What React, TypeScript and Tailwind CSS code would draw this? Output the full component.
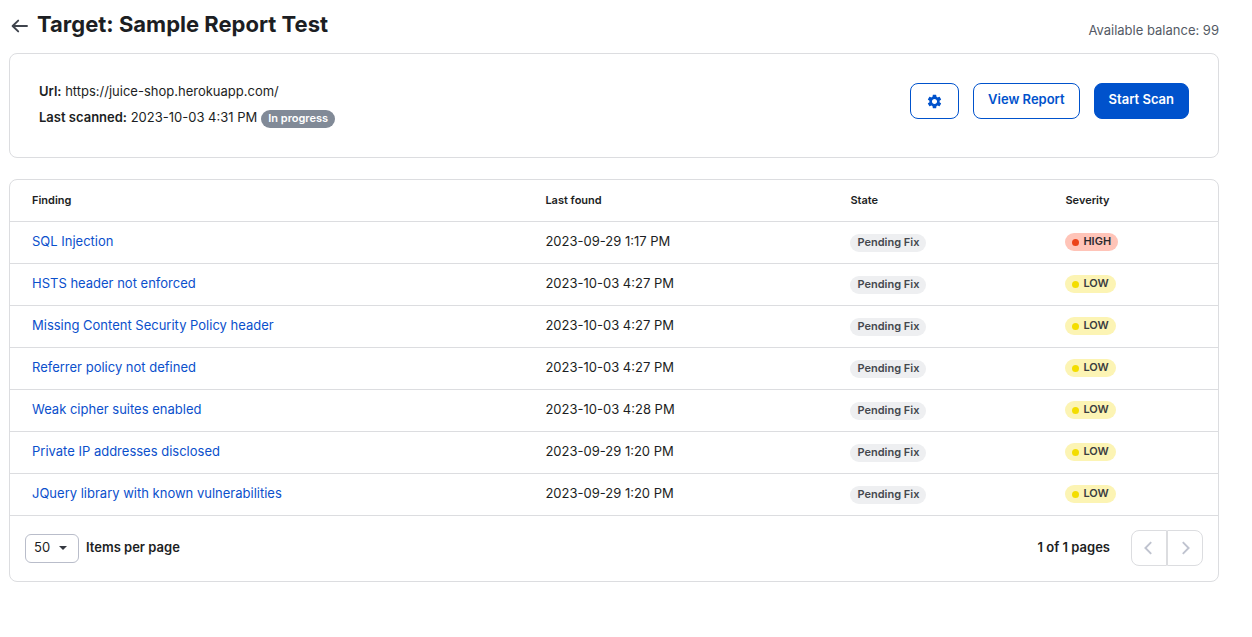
import { useState } from "react";
import { MdSettings } from "react-icons/md";

type Severity = "HIGH" | "LOW";

interface Finding {
  name: string;
  lastFound: string;
  state: string;
  severity: Severity;
}

const findings: Finding[] = [
  { name: "SQL Injection", lastFound: "2023-09-29 1:17 PM", state: "Pending Fix", severity: "HIGH" },
  { name: "HSTS header not enforced", lastFound: "2023-10-03 4:27 PM", state: "Pending Fix", severity: "LOW" },
  { name: "Missing Content Security Policy header", lastFound: "2023-10-03 4:27 PM", state: "Pending Fix", severity: "LOW" },
  { name: "Referrer policy not defined", lastFound: "2023-10-03 4:27 PM", state: "Pending Fix", severity: "LOW" },
  { name: "Weak cipher suites enabled", lastFound: "2023-10-03 4:28 PM", state: "Pending Fix", severity: "LOW" },
  { name: "Private IP addresses disclosed", lastFound: "2023-09-29 1:20 PM", state: "Pending Fix", severity: "LOW" },
  { name: "JQuery library with known vulnerabilities", lastFound: "2023-09-29 1:20 PM", state: "Pending Fix", severity: "LOW" },
];

function SeverityBadge({ level }: { level: Severity }) {
  const high = level === "HIGH";
  return (
    <span
      className={`inline-flex h-[18px] items-center gap-1 rounded-full px-[7px] text-[11px] leading-4 font-semibold ${
        high ? "bg-[#ffc4b8] text-[#2a2a2e]" : "bg-[#fcf4b4] text-[#3a3c40]"
      }`}
    >
      <span className={`mt-px size-[7px] rounded-full ${high ? "bg-[#ec4218]" : "bg-[#f3dd00]"}`} />
      <span className="pb-px">{level}</span>
    </span>
  );
}

function PageHeader() {
  return (
    <header className="flex items-start justify-between">
      <div className="flex items-center gap-2 pt-2">
        <a href="#targets" aria-label="Back to targets" className="ml-0.5 pt-1 text-[#3f444d]">
          <svg viewBox="0 0 18 16" className="h-4 w-[18px]" fill="none" stroke="currentColor" strokeWidth="1.9" strokeLinecap="round" strokeLinejoin="round">
            <path d="M16 8H2M7.2 2.6 1.6 8l5.6 5.4" />
          </svg>
        </a>
        <h1 className="text-[22px] leading-8 font-bold text-[#1c1e23]">Target: Sample Report Test</h1>
      </div>
      <p className="pt-5 text-[13px] leading-5 text-[#545a65]">Available balance: 99</p>
    </header>
  );
}

function TargetSummary() {
  return (
    <section className="mt-[13px] flex items-start justify-between rounded-lg border border-[#dcdde0] px-[29px] pt-6 pb-[27px]">
      <div className="text-[13px] leading-[26px]">
        <p>
          <strong className="font-semibold">Url:</strong> https://juice-shop.herokuapp.com/
        </p>
        <p className="flex items-center gap-1">
          <span>
            <strong className="font-semibold">Last scanned:</strong> 2023-10-03 4:31 PM
          </span>
          <span className="mt-1 flex h-[18px] items-center rounded-full bg-[#818a97] px-[7px] pb-0.5 text-[11px] leading-4 font-semibold text-white">
            In progress
          </span>
        </p>
      </div>
      <div className="flex gap-3.5 pt-[5px] text-[13px] font-semibold">
        <button type="button" aria-label="Target settings" className="flex h-9 w-[49px] items-center justify-center rounded-lg border border-[#0052cc] text-[#0052cc]">
          <MdSettings className="size-[17px]" />
        </button>
        <button type="button" className="h-9 rounded-lg border border-[#0052cc] px-3.5 pb-0.5 text-[#0052cc]">
          View Report
        </button>
        <button type="button" className="h-9 rounded-lg border border-[#0052cc] bg-[#0052cc] px-3.5 pb-0.5 text-white">
          Start Scan
        </button>
      </div>
    </section>
  );
}

function Pagination() {
  const [pageSize, setPageSize] = useState("50");
  return (
    <footer className="flex items-center justify-between px-[15px] pt-3.5 pb-[15px] text-[13px]">
      <div className="flex items-center gap-[7px]">
        <div className="relative">
          <select
            id="page-size"
            value={pageSize}
            onChange={(event) => setPageSize(event.target.value)}
            className="block h-[29px] w-[54px] appearance-none rounded-md border border-[#b9bdca] bg-white pl-2 text-[13px]"
          >
            <option>10</option>
            <option>25</option>
            <option>50</option>
          </select>
          <svg viewBox="0 0 8 4" className="pointer-events-none absolute top-3 right-3 h-1 w-2" fill="#343840">
            <path d="M0 0h8L4 4z" />
          </svg>
        </div>
        <label htmlFor="page-size" className="font-semibold">
          Items per page
        </label>
      </div>
      <div className="flex items-center gap-[21px]">
        <span className="font-semibold">1 of 1 pages</span>
        <div className="flex text-[#bfc3cf]">
          <button type="button" disabled aria-label="Previous page" className="flex h-9 w-9 items-center justify-center rounded-l-lg border border-[#dcdde0] pr-0.5">
            <svg viewBox="0 0 8 14" className="h-3.5 w-2" fill="none" stroke="currentColor" strokeWidth="1.9">
              <path d="M7.2 1.2 1.4 7l5.8 5.8" />
            </svg>
          </button>
          <button type="button" disabled aria-label="Next page" className="flex h-9 w-9 items-center justify-center rounded-r-lg border border-[#dcdde0] pl-0.5">
            <svg viewBox="0 0 8 14" className="h-3.5 w-2" fill="none" stroke="currentColor" strokeWidth="1.9">
              <path d="M.8 1.2 6.6 7 .8 12.8" />
            </svg>
          </button>
        </div>
      </div>
    </footer>
  );
}

export default function App() {
  return (
    <main className="bg-white pr-[33px] pb-10 pl-[9px] font-['Inter',sans-serif] text-[#1c1e23]">
      <PageHeader />
      <TargetSummary />
      <section className="mt-[21px] rounded-lg border border-[#dcdde0]">
        <table className="w-full table-fixed border-separate border-spacing-0 text-left text-[13px] leading-5">
          <thead>
            <tr className="text-[11px] *:h-[42px] *:border-b *:border-[#dcdde0] *:pb-0.5 *:pl-[22px] *:font-semibold">
              <th className="w-[42.5%]">Finding</th>
              <th className="w-[25.25%]">Last found</th>
              <th className="w-[17.8%]">State</th>
              <th>Severity</th>
            </tr>
          </thead>
          <tbody>
            {findings.map((finding) => (
              <tr key={finding.name} className="*:h-[42px] *:border-b *:border-[#dcdde0] *:pl-[22px]">
                <td className="pb-1">
                  <a href="#finding" className="text-[#0b50cc]">
                    {finding.name}
                  </a>
                </td>
                <td className="pb-1">{finding.lastFound}</td>
                <td>
                  <span className="flex h-[18px] w-fit items-center rounded-full bg-[#eeeff1] px-[7px] pb-px text-[11px] leading-4 font-semibold text-[#45484e]">
                    {finding.state}
                  </span>
                </td>
                <td className="pb-0.5">
                  <div className="flex">
                    <SeverityBadge level={finding.severity} />
                  </div>
                </td>
              </tr>
            ))}
          </tbody>
        </table>
        <Pagination />
      </section>
    </main>
  );
}
